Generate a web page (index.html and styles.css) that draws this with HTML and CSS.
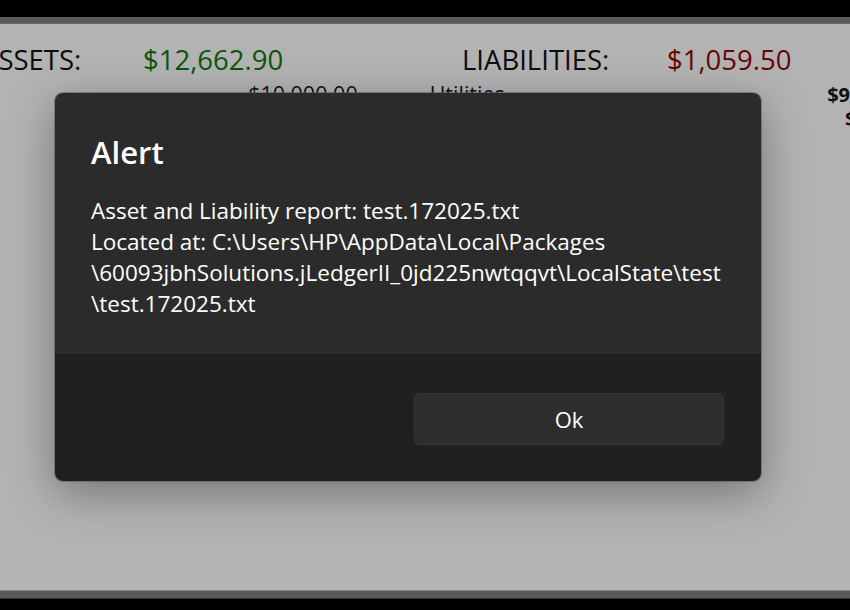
FILE: index.html
```html
<!DOCTYPE html>
<html>
<head>
<meta charset="utf-8">
<link rel="stylesheet" href="styles.css">
</head>
<body>
<div class="window">
  <div class="topbar"></div>
  <div class="band"></div>
  <main class="main">
    <div class="row row-totals">
      <span class="label label-assets">ASSETS:</span>
      <span class="amount green">$12,662.90</span>
      <span class="label label-liab">LIABILITIES:</span>
      <span class="amount red">$1,059.50</span>
    </div>
    <div class="row row-items">
      <span class="item-amount">$10,000.00</span>
      <span class="item-name">Utilities</span>
      <span class="item-amount right">$9</span>
    </div>
    <div class="row row-items2">
      <span class="item-amount right2">$</span>
    </div>
  </main>
  <div class="band band-bottom"></div>
  <div class="bottombar"></div>

  <div class="dialog">
    <div class="dialog-body">
      <h1 class="dialog-title">Alert</h1>
      <p class="dialog-text">Asset and Liability report: test.172025.txt<br>Located at: C:\Users\HP\AppData\Local\Packages<br>\60093jbhSolutions.jLedgerII_0jd225nwtqqvt\LocalState\test<br>\test.172025.txt</p>
    </div>
    <div class="dialog-footer">
      <button class="btn">Ok</button>
    </div>
  </div>
</div>
</body>
</html>
```

FILE: styles.css
```css
* { box-sizing: border-box; }
html, body { margin: 0; padding: 0; }
body {
  width: 850px;
  height: 610px;
  overflow: hidden;
  background: #000;
  font-family: "Open Sans", "Noto Sans", sans-serif;
}
.window {
  position: relative;
  width: 850px;
  height: 610px;
  display: flex;
  flex-direction: column;
}
.topbar { height: 17px; background: #000; }
.band { height: 7px; background: #5b5b5b; border-bottom: 1px solid #6a6a6a; }
.band-bottom { border-bottom: none; border-top: 1px solid #8a8a8a; height: 8px; background: #595959; }
.bottombar { height: 12px; background: #000; border-top: 1px solid #333; }
.main {
  flex: 1;
  background: #b3b3b3;
  overflow: hidden;
  padding-top: 17px;
}
.row { display: flex; align-items: baseline; white-space: nowrap; }
.row-totals { height: 38px; font-size: 27.5px; color: #0d0d0d; }
.label-assets { margin-left: -19px; width: 162px; }
.amount.green { color: #0a560a; width: 319px; }
.label-liab { width: 205px; }
.amount.red { color: #680606; }
.row-items { font-size: 21.5px; color: #111; height: 26px; }
.row-items .item-amount:first-child { width: 360px; text-align: right; }
.item-name { margin-left: 72px; width: 400px; }
.right { font-weight: 700; font-size: 20px; }
.row-items2 { font-size: 20px; color: #111; }
.right2 { margin-left: 845px; font-weight: 700; }

.dialog {
  position: absolute;
  left: 55px;
  top: 93px;
  width: 706px;
  height: 388px;
  border-radius: 8px;
  overflow: hidden;
  display: flex;
  flex-direction: column;
  box-shadow: 0 0 0 1px rgba(90, 90, 90, 0.6), 0 12px 45px rgba(0, 0, 0, 0.35);
}
.dialog-body {
  flex: 1;
  background: #2b2b2b;
  padding: 39px 36px 0 36px;
  color: #fff;
}
.dialog-title {
  margin: 0;
  font-size: 31px;
  font-weight: 600;
  line-height: 40px;
}
.dialog-text {
  margin: 23px 0 0 0;
  font-size: 22.5px;
  line-height: 31px;
}
.dialog-footer {
  height: 127px;
  background: #202020;
  border-top: 1px solid #1c1c1c;
  display: flex;
  justify-content: flex-end;
  padding: 38px 37px 0 0;
}
.btn {
  width: 310px;
  height: 52px;
  background: #2d2d2d;
  border: 1px solid #353535;
  border-radius: 6px;
  color: #fff;
  font-family: inherit;
  font-size: 22px;
}
```
